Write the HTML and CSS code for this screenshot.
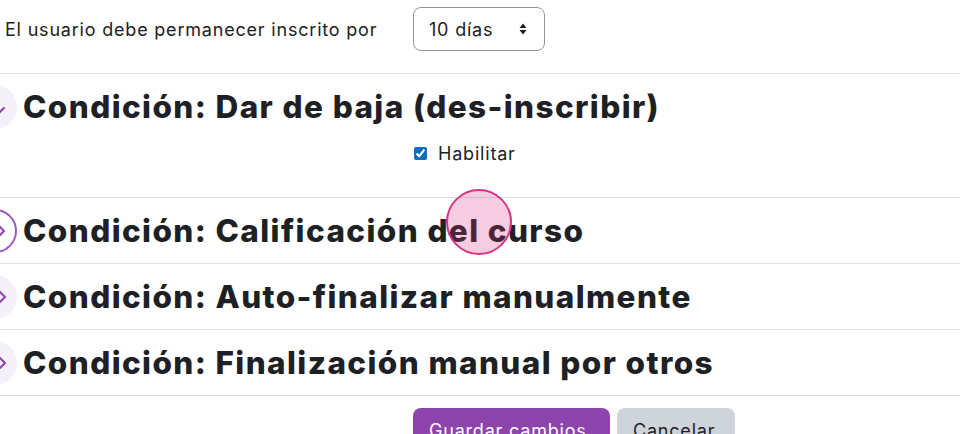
FILE: index.html
```html
<!DOCTYPE html>
<html lang="es">
<head>
	<meta charset="UTF-8" />
	<title>Condiciones</title>
	<link rel="stylesheet" href="styles.css">
</head>
<body>
	<div class="page">
		<div class="field-row">
			<label class="field-label">El usuario debe permanecer inscrito por</label>
			<div class="select">
				<span>10 días</span>
				<svg class="caret" width="10" height="14" viewBox="0 0 10 14"><path d="M5 1.5L8.5 6h-7z M5 12.5L1.5 8h7z" fill="#1d2125"/></svg>
			</div>
		</div>

		<section class="cond">
			<div class="cond-head">
				<span class="toggle open">
					<svg width="16" height="16" viewBox="0 0 16 16"><path d="M3 6l5 5 5-5" fill="none" stroke="#8e44ad" stroke-width="2" stroke-linecap="round" stroke-linejoin="round"/></svg>
				</span>
				<h3>Condición: Dar de baja (des-inscribir)</h3>
			</div>
			<div class="cond-body">
				<label class="check"><input type="checkbox" checked /> Habilitar</label>
			</div>
		</section>

		<section class="cond">
			<div class="cond-head">
				<span class="toggle hover">
					<svg width="16" height="16" viewBox="0 0 16 16"><path d="M5 3l5 5-5 5" fill="none" stroke="#8e44ad" stroke-width="2" stroke-linecap="round" stroke-linejoin="round"/></svg>
				</span>
				<h3>Condición: Calificación del curso</h3>
			</div>
		</section>

		<section class="cond">
			<div class="cond-head">
				<span class="toggle">
					<svg width="16" height="16" viewBox="0 0 16 16"><path d="M5 3l5 5-5 5" fill="none" stroke="#8e44ad" stroke-width="2" stroke-linecap="round" stroke-linejoin="round"/></svg>
				</span>
				<h3>Condición: Auto-finalizar manualmente</h3>
			</div>
		</section>

		<section class="cond">
			<div class="cond-head">
				<span class="toggle">
					<svg width="16" height="16" viewBox="0 0 16 16"><path d="M5 3l5 5-5 5" fill="none" stroke="#8e44ad" stroke-width="2" stroke-linecap="round" stroke-linejoin="round"/></svg>
				</span>
				<h3>Condición: Finalización manual por otros</h3>
			</div>
		</section>

		<div class="actions">
			<button class="btn primary">Guardar cambios</button>
			<button class="btn secondary">Cancelar</button>
		</div>
	</div>
	<!-- marca del clic -->
	<div class="click-mark"></div>
</body>
</html>
```

FILE: styles.css
```css
html, body{
	margin:0;
	padding:0;
	background:#fff;
	overflow:hidden;
}
body{
	font-family:Inter, "Noto Sans", sans-serif;
	color:#1d2125;
	font-size:18px;
	letter-spacing:0.8px;
	width:960px;
	height:434px;
	position:relative;
}
.page{
	display:flex;
	flex-direction:column;
}
.field-row{
	display:flex;
	align-items:center;
	padding:7px 0 22px;
	border-bottom:1px solid #dee2e6;
}
.field-label{
	width:408px;
	padding-left:5px;
}
.select{
	width:132px;
	height:44px;
	box-sizing:border-box;
	border:1px solid #8f959e;
	border-radius:8px;
	display:flex;
	align-items:center;
	justify-content:space-between;
	padding:0 16px 0 15px;
}
.cond{
	border-bottom:1px solid #dee2e6;
}
.cond-head{
	display:flex;
	align-items:center;
	height:65px;
	margin-left:-27px;
	gap:6px;
}
.cond-head h3{
	margin:0;
	font-size:31.5px;
	font-weight:800;
	letter-spacing:1.4px;
	white-space:nowrap;
}
.toggle{
	width:44px;
	height:44px;
	flex:none;
	border-radius:50%;
	background:#f5f0fa;
	box-sizing:border-box;
	display:flex;
	align-items:center;
	justify-content:flex-end;
	padding-right:6px;
}
.toggle.open{
	padding-right:10px;
	padding-top:6px;
}
.toggle.hover{
	background:#fff;
	border:2px solid #9a5cc0;
	padding-right:5px;
}
.cond-body{
	padding:0 0 30px 414px;
	height:28px;
}
.check{
	display:flex;
	align-items:center;
	height:28px;
	gap:11px;
}
.check input{
	margin:0;
	width:13px;
	height:13px;
	accent-color:#0f6cbf;
}
.actions{
	display:flex;
	gap:7px;
	padding:12px 0 0 413px;
}
.btn{
	font-family:inherit;
	font-size:18px;
	letter-spacing:0.8px;
	border:none;
	border-radius:8px;
	height:46px;
	padding:0 16px;
	line-height:46px;
	text-align:left;
}
.btn.primary{
	background:#8e44ad;
	color:#fff;
	width:197px;
}
.btn.secondary{
	background:#ced4da;
	color:#1d2125;
	width:118px;
}
.click-mark{
	position:absolute;
	left:446px;
	top:189px;
	width:62px;
	height:62px;
	border:2px solid #d63384;
	border-radius:50%;
	background:rgba(214,51,132,0.25);
}
```
